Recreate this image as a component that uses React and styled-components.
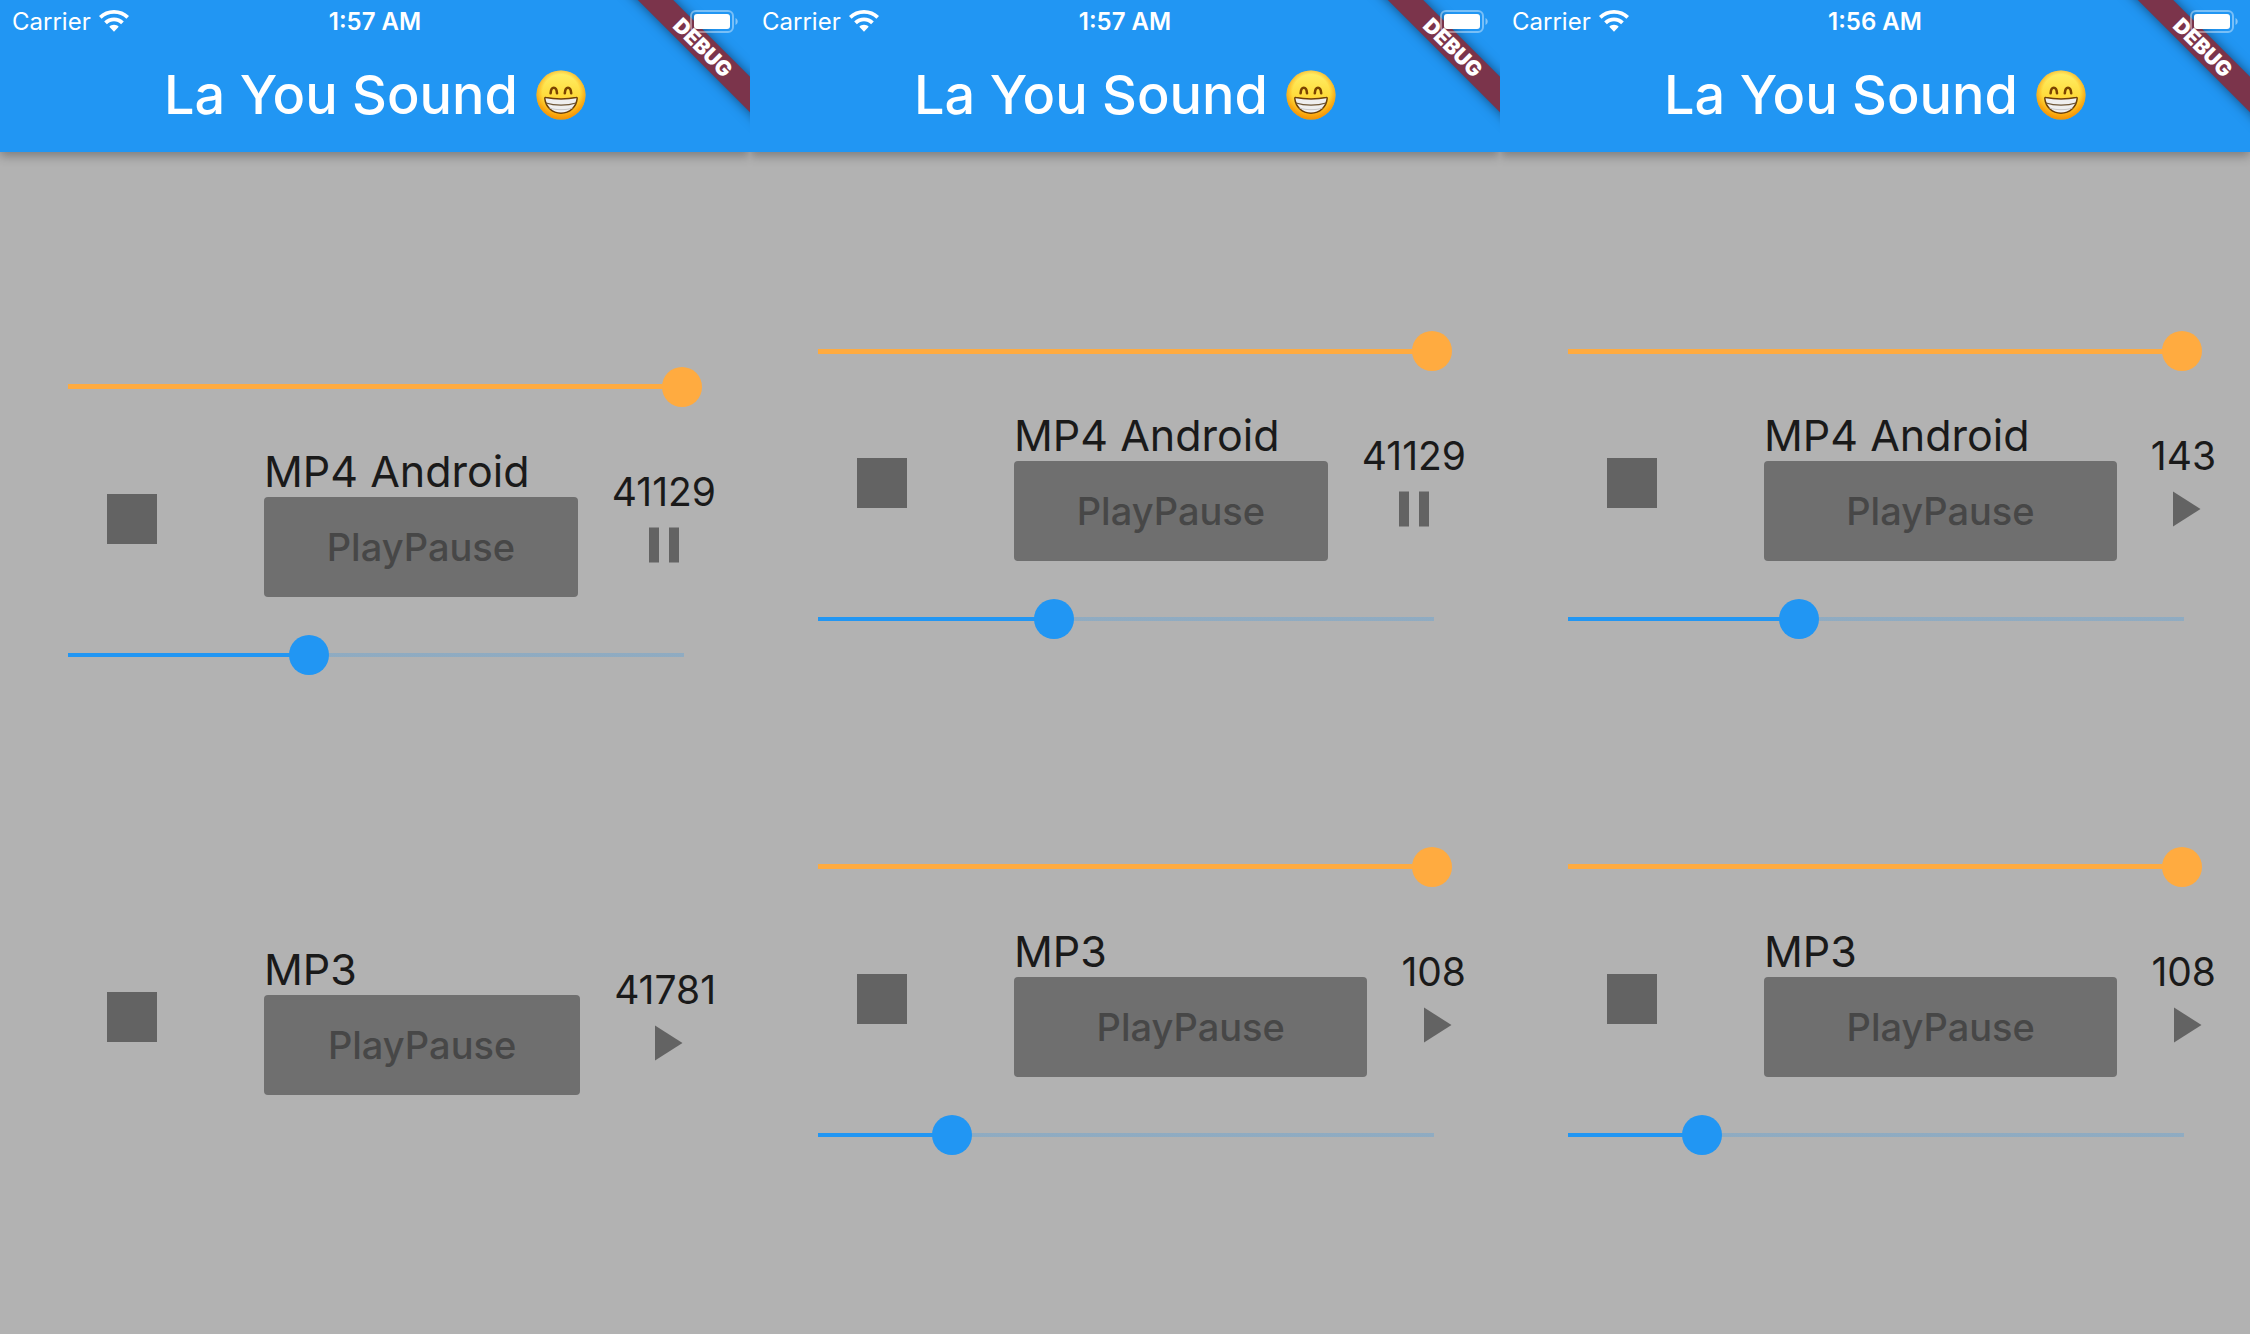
import React, { useId, useState } from "react";
import styled, { createGlobalStyle } from "styled-components";

const GlobalStyle = createGlobalStyle`
  *, *::before, *::after { box-sizing: border-box; }
  body {
    margin: 0;
    background: #b2b2b2;
    font-family: Inter, "Liberation Sans", sans-serif;
    color: #1a1a1a;
  }
`;

const Gallery = styled.div`
  display: grid;
  grid-template-columns: repeat(3, minmax(0, 1fr));
  min-height: 100vh;
`;

const Phone = styled.section`
  position: relative;
  display: flex;
  flex-direction: column;
  overflow: hidden;
  background: #b2b2b2;
`;

const Header = styled.header`
  background: #2196f3;
  color: #fff;
  box-shadow: 0 4px 10px rgba(0, 0, 0, 0.3);
`;

const StatusBar = styled.div`
  display: grid;
  grid-template-columns: 1fr auto 1fr;
  align-items: center;
  height: 40px;
  padding: 0 12px;
  font-size: 24px;
  line-height: 40px;
`;

const Carrier = styled.div`
  display: flex;
  align-items: center;
  gap: 8px;
`;

const CarrierName = styled.span`
  padding-top: 2px;
`;

const Clock = styled.time`
  padding-top: 2px;
  font-weight: 600;
`;

const BatterySlot = styled.div`
  position: relative;
  z-index: 2;
  display: flex;
  justify-content: flex-end;
`;

const TitleBar = styled.div`
  display: flex;
  align-items: center;
  justify-content: center;
  gap: 18px;
  height: 112px;
  padding-bottom: 2px;
`;

const Title = styled.h1`
  margin: 0;
  font-size: 54px;
  line-height: 64px;
  font-weight: 500;
`;

const DebugBanner = styled.div`
  position: absolute;
  z-index: 1;
  top: 35px;
  right: -53px;
  width: 200px;
  height: 25px;
  transform: rotate(45deg);
  background: #7b344b;
  box-shadow: 0 0 12px rgba(0, 0, 0, 0.5);
  color: #fff;
  font-size: 21px;
  line-height: 25px;
  font-weight: 900;
  text-align: center;
`;

const Body = styled.main`
  flex: 1;
  display: flex;
  flex-direction: column;
  justify-content: space-evenly;
`;

const Player = styled.section`
  padding: ${(p) => (p.$compact ? "44px 0 42px" : "0")};
`;

const SliderRow = styled.div`
  display: flex;
  align-items: center;
  height: 96px;
  padding: 0 48px;
`;

const trackPaint = (p) => `
  linear-gradient(${p.$color}, ${p.$color}) 20px 50% / calc((100% - 40px) * ${p.$ratio}) ${p.$thickness}px no-repeat,
  linear-gradient(${p.$color}3d, ${p.$color}3d) 20px 50% / calc(100% - 38px) ${p.$thickness}px no-repeat
`;

const Range = styled.input`
  appearance: none;
  flex: 1;
  min-width: 0;
  height: 40px;
  margin: 0;
  background: transparent;

  &::-webkit-slider-runnable-track {
    height: 40px;
    background: ${trackPaint};
  }

  &::-webkit-slider-thumb {
    appearance: none;
    width: 40px;
    height: 40px;
    border-radius: 50%;
    background: ${(p) => p.$color};
  }
`;

const Controls = styled.div`
  display: flex;
  align-items: center;
  height: 172px;
  padding: 2px 34px 0 82px;
`;

const StopButton = styled.button`
  display: block;
  padding: 0 0 6px;
  margin-right: 82px;
  border: 0;
  background: none;
  color: #636363;
`;

const Track = styled.div`
  flex: 1;
  min-width: 0;
`;

const TrackName = styled.h2`
  margin: 0;
  padding-bottom: 2px;
  font-size: 43px;
  line-height: 48px;
  font-weight: 400;
`;

const PlayPauseButton = styled.button`
  display: block;
  width: 100%;
  height: 100px;
  padding: 0;
  border: 0;
  border-radius: 4px;
  background: #6f6f6f;
  color: #474747;
  font-family: inherit;
  font-size: 38px;
  font-weight: 500;
`;

const Meter = styled.div`
  display: flex;
  flex-direction: column;
  align-items: center;
  margin-left: 34px;
  color: #636363;
`;

const Count = styled.output`
  color: #1a1a1a;
  font-size: 39px;
  line-height: 46px;
`;

const Icon = styled.svg`
  display: block;
  flex: none;
`;

function Wifi() {
  return (
    <Icon width="30" height="22" viewBox="0 0 30 22" fill="#fff" aria-hidden="true">
      <path d="M15 0C9.200 0 3.900 2.200 0 6l2.600 2.800C5.900 5.600 10.200 3.800 15 3.800s9.100 1.800 12.400 5L30 6C26.100 2.200 20.800 0 15 0Z" />
      <path d="M15 7.600c-3.800 0-7.200 1.400-9.800 3.900l2.700 2.700c1.900-1.800 4.400-2.900 7.100-2.900s5.200 1.100 7.100 2.900l2.700-2.700c-2.600-2.500-6-3.900-9.800-3.900Z" />
      <path d="M15 14.800c-1.900 0-3.500.7-4.700 1.900L15 21.800l4.700-5.100c-1.200-1.200-2.800-1.900-4.700-1.900Z" />
    </Icon>
  );
}

function Battery() {
  return (
    <Icon width="48" height="23" viewBox="0 0 48 23" aria-hidden="true">
      <rect x="1" y="1" width="42" height="21" rx="5" fill="none" stroke="#fff" strokeOpacity="0.4" strokeWidth="2" />
      <rect x="4" y="4" width="36" height="15" rx="3" fill="#fff" />
      <path d="M45.500 8c1.600.7 2.200 2 2.200 3.500s-.6 2.800-2.200 3.500Z" fill="#fff" fillOpacity="0.45" />
    </Icon>
  );
}

function GrinFace() {
  const id = useId();
  return (
    <Icon width="50" height="50" viewBox="0 0 50 50" role="img" aria-label="Grinning face">
      <defs>
        <linearGradient id={id + "face"} x1="0" y1="0" x2="0" y2="1">
          <stop offset="0" stopColor="#fff06a" />
          <stop offset="0.5" stopColor="#ffdc3c" />
          <stop offset="1" stopColor="#ffb010" />
        </linearGradient>
        <radialGradient id={id + "rim"} cx="0.5" cy="0.46" r="0.54">
          <stop offset="0.7" stopColor="#f88c00" stopOpacity="0" />
          <stop offset="1" stopColor="#f08a00" stopOpacity="0.8" />
        </radialGradient>
      </defs>
      <circle cx="25" cy="25" r="24.500" fill={`url(#${id}face)`} />
      <circle cx="25" cy="25" r="24.500" fill={`url(#${id}rim)`} />
      <path d="M14.600 23.300c.2-3.600 1.500-5.600 3.200-5.600s3 2 3.200 5.600M28.800 23.300c.2-3.600 1.500-5.600 3.200-5.600s3 2 3.200 5.600" fill="none" stroke="#7a4300" strokeWidth="2.600" strokeLinecap="round" />
      <path d="M8.800 28.600c-.1-.9.4-1.200 1.200-1 4.600 1 9.700 1.400 15 1.400s10.400-.4 15-1.400c.8-.2 1.300.1 1.200 1C40.200 37 33.900 43.200 25 43.200S9.800 37 8.800 28.600Z" fill="#efefef" stroke="#6d3f08" strokeWidth="1.500" />
      <path d="M10 33c4.500 1.500 9.500 2.200 15 2.200s10.500-.7 15-2.200" fill="none" stroke="#6d5636" strokeWidth="1.300" />
      <path d="M13.500 38c3.600 1.200 7.400 1.700 11.500 1.700s7.900-.5 11.500-1.700" fill="none" stroke="#c4c4c4" strokeWidth="0.900" />
    </Icon>
  );
}

function StopIcon() {
  return (
    <Icon width="100" height="100" viewBox="0 0 100 100" fill="currentColor" aria-hidden="true">
      <path d="M25 25h50v50H25z" />
    </Icon>
  );
}

function StateIcon({ playing }) {
  return (
    <Icon width="60" height="60" viewBox="0 0 24 24" fill="currentColor" role="img" aria-label={playing ? "Pause" : "Play"}>
      <path d={playing ? "M6 19h4V5H6v14zm8-14v14h4V5h-4z" : "M8 5v14l11-7z"} />
    </Icon>
  );
}

function Slider({ label, color, initial, thickness }) {
  const [value, setValue] = useState(initial);
  return (
    <SliderRow>
      <Range
        type="range"
        min="0"
        max="1000"
        aria-label={label}
        value={value}
        onChange={(e) => setValue(Number(e.target.value))}
        $color={color}
        $thickness={thickness}
        $ratio={value / 1000}
      />
    </SliderRow>
  );
}

function TrackPlayer({ name, count, playing, position, sliders = true }) {
  return (
    <Player $compact={!sliders} aria-label={name}>
      {sliders && <Slider label={`${name} volume`} color="#ffab40" initial={1000} thickness={5} />}
      <Controls>
        <StopButton type="button" aria-label={`Stop ${name}`}>
          <StopIcon />
        </StopButton>
        <Track>
          <TrackName>{name}</TrackName>
          <PlayPauseButton type="button">PlayPause</PlayPauseButton>
        </Track>
        <Meter>
          <Count>{count}</Count>
          <StateIcon playing={playing} />
        </Meter>
      </Controls>
      {sliders && <Slider label={`${name} position`} color="#2196f3" initial={position} thickness={4} />}
    </Player>
  );
}

const screens = [
  {
    time: "1:57 AM",
    tracks: [
      { name: "MP4 Android", count: 41129, playing: true, position: 392 },
      { name: "MP3", count: 41781, playing: false, sliders: false },
    ],
  },
  {
    time: "1:57 AM",
    tracks: [
      { name: "MP4 Android", count: 41129, playing: true, position: 385 },
      { name: "MP3", count: 108, playing: false, position: 218 },
    ],
  },
  {
    time: "1:56 AM",
    tracks: [
      { name: "MP4 Android", count: 143, playing: false, position: 376 },
      { name: "MP3", count: 108, playing: false, position: 218 },
    ],
  },
];

export default function App() {
  return (
    <>
      <GlobalStyle />
      <Gallery>
        {screens.map((screen, i) => (
          <Phone key={i}>
            <Header>
              <StatusBar>
                <Carrier>
                  <CarrierName>Carrier</CarrierName>
                  <Wifi />
                </Carrier>
                <Clock>{screen.time}</Clock>
                <BatterySlot>
                  <Battery />
                </BatterySlot>
              </StatusBar>
              <TitleBar>
                <Title>La You Sound</Title>
                <GrinFace />
              </TitleBar>
            </Header>
            <DebugBanner>DEBUG</DebugBanner>
            <Body>
              {screen.tracks.map((track) => (
                <TrackPlayer key={track.name} {...track} />
              ))}
            </Body>
          </Phone>
        ))}
      </Gallery>
    </>
  );
}
